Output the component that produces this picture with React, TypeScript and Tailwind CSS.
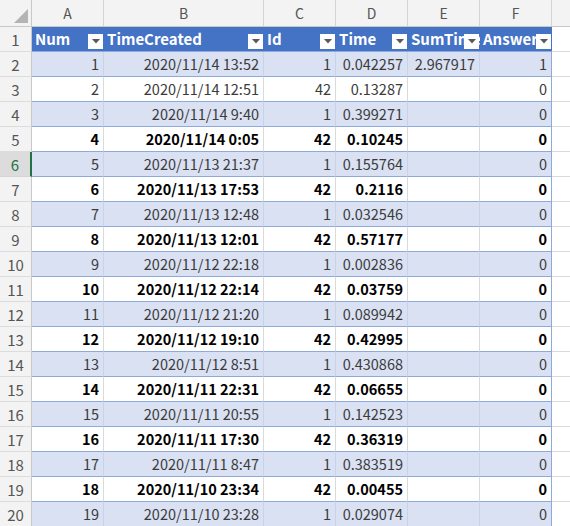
import React from "react"

type Row = {
    num: number
    time: string
    id: number
    dur: string
    sum?: string
    ans: number
}

const data: Row[] = [
    { num: 1, time: "2020/11/14 13:52", id: 1, dur: "0.042257", sum: "2.967917", ans: 1 },
    { num: 2, time: "2020/11/14 12:51", id: 42, dur: "0.13287", ans: 0 },
    { num: 3, time: "2020/11/14 9:40", id: 1, dur: "0.399271", ans: 0 },
    { num: 4, time: "2020/11/14 0:05", id: 42, dur: "0.10245", ans: 0 },
    { num: 5, time: "2020/11/13 21:37", id: 1, dur: "0.155764", ans: 0 },
    { num: 6, time: "2020/11/13 17:53", id: 42, dur: "0.2116", ans: 0 },
    { num: 7, time: "2020/11/13 12:48", id: 1, dur: "0.032546", ans: 0 },
    { num: 8, time: "2020/11/13 12:01", id: 42, dur: "0.57177", ans: 0 },
    { num: 9, time: "2020/11/12 22:18", id: 1, dur: "0.002836", ans: 0 },
    { num: 10, time: "2020/11/12 22:14", id: 42, dur: "0.03759", ans: 0 },
    { num: 11, time: "2020/11/12 21:20", id: 1, dur: "0.089942", ans: 0 },
    { num: 12, time: "2020/11/12 19:10", id: 42, dur: "0.42995", ans: 0 },
    { num: 13, time: "2020/11/12 8:51", id: 1, dur: "0.430868", ans: 0 },
    { num: 14, time: "2020/11/11 22:31", id: 42, dur: "0.06655", ans: 0 },
    { num: 15, time: "2020/11/11 20:55", id: 1, dur: "0.142523", ans: 0 },
    { num: 16, time: "2020/11/11 17:30", id: 42, dur: "0.36319", ans: 0 },
    { num: 17, time: "2020/11/11 8:47", id: 1, dur: "0.383519", ans: 0 },
    { num: 18, time: "2020/11/10 23:34", id: 42, dur: "0.00455", ans: 0 },
    { num: 19, time: "2020/11/10 23:28", id: 1, dur: "0.029074", ans: 0 },
]

const headers = [
    { label: "Num", w: "w-[72px]" },
    { label: "TimeCreated", w: "w-[160px]" },
    { label: "Id", w: "w-[72px]" },
    { label: "Time", w: "w-[72px]" },
    { label: "SumTime", w: "w-[72px]" },
    { label: "Answer", w: "w-[72px]" },
]

const letters = ["A", "B", "C", "D", "E", "F"]

function FilterButton() {
    return (
        <div className="absolute right-[1px] bottom-[2px] flex h-[15px] w-[15px] items-center justify-center bg-white">
            <svg width="8" height="5" viewBox="0 0 8 5">
                <path d="M0 0 L8 0 L4 4.5 Z" fill="#595959" />
            </svg>
        </div>
    )
}

function RowHeader({ n, active }: { n: number; active?: boolean }) {
    return (
        <div
            className={
                active
                    ? "flex w-[32px] shrink-0 items-center justify-center border-b border-r-2 border-b-[#d4d4d4] border-r-[#217346] bg-[#dcdcdc] text-[15px] text-[#217346]"
                    : "flex w-[32px] shrink-0 items-center justify-center border-b border-r border-b-[#dcdcdc] border-r-[#c8c8c8] bg-[#f3f3f3] text-[15px] text-[#555]"
            }
        >
            {n}
        </div>
    )
}

function Cell({
    w,
    band,
    bold,
    last,
    children,
}: {
    w: string
    band: boolean
    bold: boolean
    last?: boolean
    children?: React.ReactNode
}) {
    const base = `${w} shrink-0 flex items-center justify-end overflow-hidden whitespace-nowrap border-b border-r pr-[4px] border-b-[#8ea9db]`
    const bg = band ? " bg-[#d9e1f2]" : " bg-white"
    const right = last ? " border-r-[#8ea9db]" : band ? " border-r-[#c9d3e8]" : " border-r-[#dadada]"
    const txt = bold ? " font-bold text-black" : " text-[#3b3b3b]"
    return <div className={base + bg + right + txt}>{children}</div>
}

export default function App() {
    return (
        <div
            className="h-[526px] w-[570px] overflow-hidden bg-white text-[14.5px] leading-none"
            style={{ fontFamily: '"Noto Sans CJK JP", "Noto Sans", sans-serif' }}
        >
            {/* column letters */}
            <div className="flex h-[27px] border-b border-[#c8c8c8] bg-[#f3f3f3] text-[14px] text-[#555]">
                <div className="relative w-[32px] shrink-0 border-r border-[#c8c8c8]">
                    <svg className="absolute right-[3px] bottom-[3px]" width="14" height="14" viewBox="0 0 14 14">
                        <path d="M14 0 L14 14 L0 14 Z" fill="#b4b4b4" />
                    </svg>
                </div>
                {headers.map((h, i) => (
                    <div
                        key={h.label}
                        className={`${h.w} flex shrink-0 items-center justify-center border-r border-[#d4d4d4]`}
                    >
                        {letters[i]}
                    </div>
                ))}
                <div className="flex-1" />
            </div>

            {/* table header row */}
            <div className="flex h-[25px]">
                <RowHeader n={1} />
                {headers.map((h) => (
                    <div
                        key={h.label}
                        className={`${h.w} relative shrink-0 overflow-hidden whitespace-nowrap border-b border-b-[#8ea9db] bg-[#4472c4] pl-[3px] pt-[4px] text-[15px] font-bold text-white`}
                    >
                        {h.label}
                        <FilterButton />
                    </div>
                ))}
                <div className="flex-1 border-b border-[#dadada]" />
            </div>

            {data.map((r, i) => {
                const band = i % 2 === 0
                const bold = r.num % 2 === 0 && r.num > 2
                return (
                    <div key={r.num} className="flex h-[25px]">
                        <RowHeader n={i + 2} active={i + 2 === 6} />
                        <Cell w="w-[72px]" band={band} bold={bold}>{r.num}</Cell>
                        <Cell w="w-[160px]" band={band} bold={bold}>{r.time}</Cell>
                        <Cell w="w-[72px]" band={band} bold={bold}>{r.id}</Cell>
                        <Cell w="w-[72px]" band={band} bold={bold}>{r.dur}</Cell>
                        <Cell w="w-[72px]" band={band} bold={bold}>{r.sum}</Cell>
                        <Cell w="w-[72px]" band={band} bold={bold} last>{r.ans}</Cell>
                        <div className="flex-1 border-b border-[#dadada]" />
                    </div>
                )
            })}
        </div>
    )
}
